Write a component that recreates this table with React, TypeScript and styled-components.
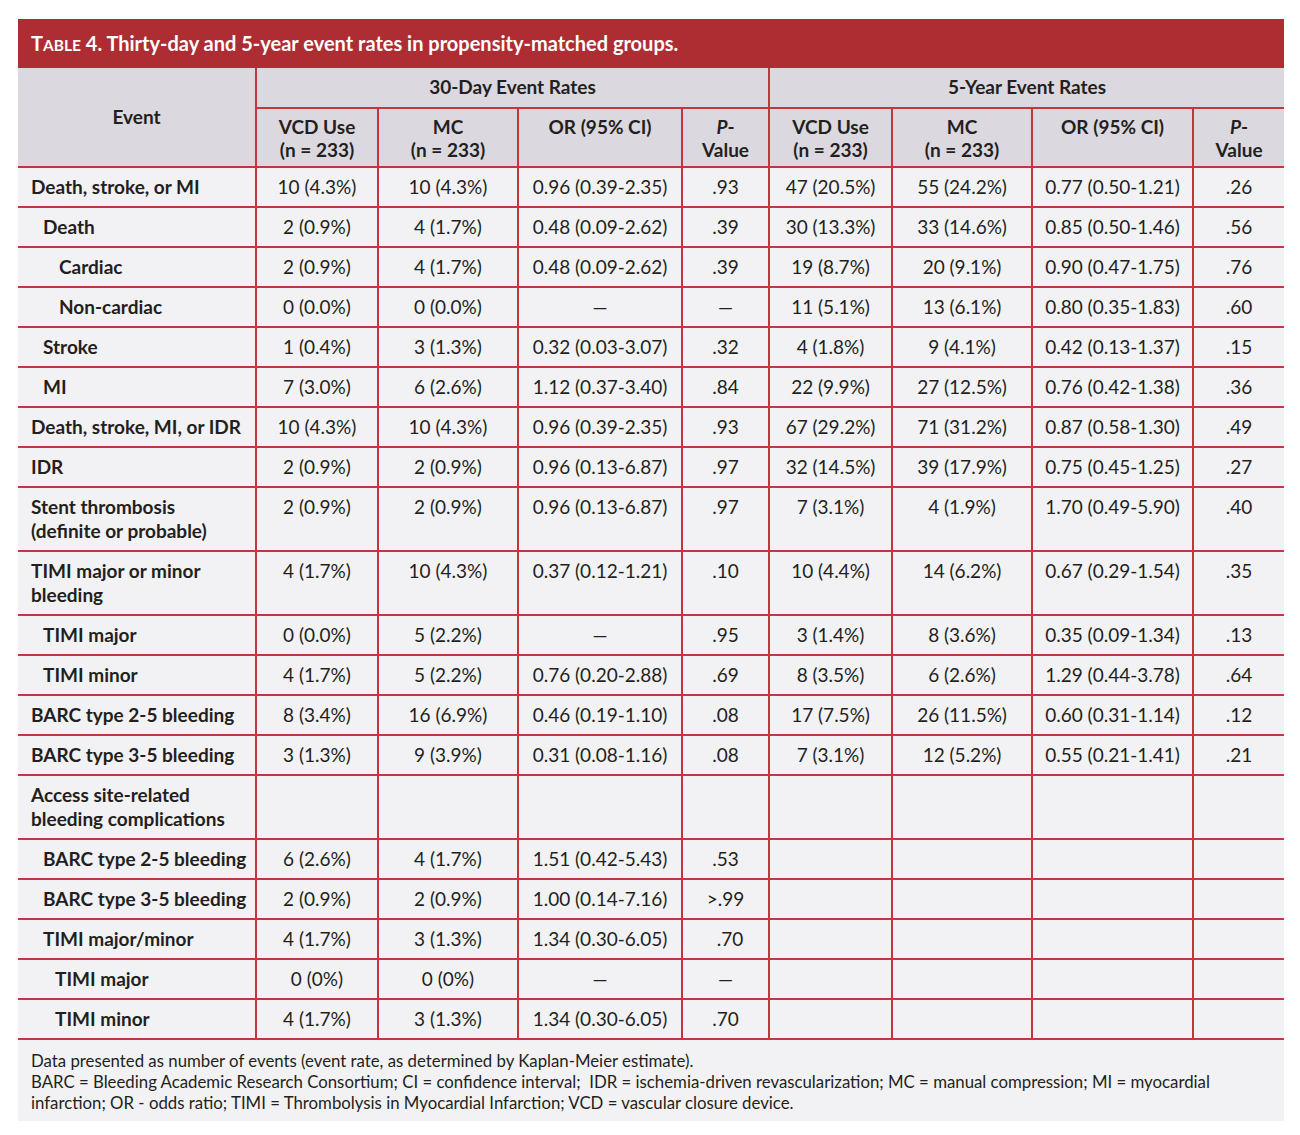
import React from "react";
import styled, { createGlobalStyle } from "styled-components";

const GlobalStyle = createGlobalStyle`
	html, body {
		margin: 0;
		padding: 0;
		background: #ffffff;
	}
	body {
		font-family: Lato, "Open Sans", sans-serif;
		color: #231f20;
	}
`;

type Row = {
	label: React.ReactNode;
	level: number;
	cells: string[];
	shift?: number;
};

const rows: Row[] = [
	{ label: "Death, stroke, or MI", level: 0, cells: ["10 (4.3%)", "10 (4.3%)", "0.96 (0.39-2.35)", ".93", "47 (20.5%)", "55 (24.2%)", "0.77 (0.50-1.21)", ".26"] },
	{ label: "Death", level: 1, cells: ["2 (0.9%)", "4 (1.7%)", "0.48 (0.09-2.62)", ".39", "30 (13.3%)", "33 (14.6%)", "0.85 (0.50-1.46)", ".56"] },
	{ label: "Cardiac", level: 3, cells: ["2 (0.9%)", "4 (1.7%)", "0.48 (0.09-2.62)", ".39", "19 (8.7%)", "20 (9.1%)", "0.90 (0.47-1.75)", ".76"] },
	{ label: "Non-cardiac", level: 3, cells: ["0 (0.0%)", "0 (0.0%)", "—", "—", "11 (5.1%)", "13 (6.1%)", "0.80 (0.35-1.83)", ".60"] },
	{ label: "Stroke", level: 1, cells: ["1 (0.4%)", "3 (1.3%)", "0.32 (0.03-3.07)", ".32", "4 (1.8%)", "9 (4.1%)", "0.42 (0.13-1.37)", ".15"] },
	{ label: "MI", level: 1, cells: ["7 (3.0%)", "6 (2.6%)", "1.12 (0.37-3.40)", ".84", "22 (9.9%)", "27 (12.5%)", "0.76 (0.42-1.38)", ".36"] },
	{ label: "Death, stroke, MI, or IDR", level: 0, cells: ["10 (4.3%)", "10 (4.3%)", "0.96 (0.39-2.35)", ".93", "67 (29.2%)", "71 (31.2%)", "0.87 (0.58-1.30)", ".49"] },
	{ label: "IDR", level: 0, cells: ["2 (0.9%)", "2 (0.9%)", "0.96 (0.13-6.87)", ".97", "32 (14.5%)", "39 (17.9%)", "0.75 (0.45-1.25)", ".27"] },
	{ label: <>Stent thrombosis<br />(definite or probable)</>, level: 0, cells: ["2 (0.9%)", "2 (0.9%)", "0.96 (0.13-6.87)", ".97", "7 (3.1%)", "4 (1.9%)", "1.70 (0.49-5.90)", ".40"] },
	{ label: <>TIMI major or minor<br />bleeding</>, level: 0, cells: ["4 (1.7%)", "10 (4.3%)", "0.37 (0.12-1.21)", ".10", "10 (4.4%)", "14 (6.2%)", "0.67 (0.29-1.54)", ".35"] },
	{ label: "TIMI major", level: 1, cells: ["0 (0.0%)", "5 (2.2%)", "—", ".95", "3 (1.4%)", "8 (3.6%)", "0.35 (0.09-1.34)", ".13"] },
	{ label: "TIMI minor", level: 1, cells: ["4 (1.7%)", "5 (2.2%)", "0.76 (0.20-2.88)", ".69", "8 (3.5%)", "6 (2.6%)", "1.29 (0.44-3.78)", ".64"] },
	{ label: "BARC type 2-5 bleeding", level: 0, cells: ["8 (3.4%)", "16 (6.9%)", "0.46 (0.19-1.10)", ".08", "17 (7.5%)", "26 (11.5%)", "0.60 (0.31-1.14)", ".12"] },
	{ label: "BARC type 3-5 bleeding", level: 0, cells: ["3 (1.3%)", "9 (3.9%)", "0.31 (0.08-1.16)", ".08", "7 (3.1%)", "12 (5.2%)", "0.55 (0.21-1.41)", ".21"] },
	{ label: <>Access site-related<br />bleeding complications</>, level: 0, cells: ["", "", "", "", "", "", "", ""] },
	{ label: "BARC type 2-5 bleeding", level: 1, cells: ["6 (2.6%)", "4 (1.7%)", "1.51 (0.42-5.43)", ".53", "", "", "", ""] },
	{ label: "BARC type 3-5 bleeding", level: 1, cells: ["2 (0.9%)", "2 (0.9%)", "1.00 (0.14-7.16)", ">.99", "", "", "", ""] },
	{ label: "TIMI major/minor", level: 1, cells: ["4 (1.7%)", "3 (1.3%)", "1.34 (0.30-6.05)", ".70", "", "", "", ""], shift: 9 },
	{ label: "TIMI major", level: 2, cells: ["0 (0%)", "0 (0%)", "—", "—", "", "", "", ""] },
	{ label: "TIMI minor", level: 2, cells: ["4 (1.7%)", "3 (1.3%)", "1.34 (0.30-6.05)", ".70", "", "", "", ""] },
];

const colWidths = [238, 122, 140, 164, 87, 123, 140, 161, 91];
const indents = [13, 25, 37, 41];

export default function App() {
	return (
		<Page>
			<GlobalStyle />
			<Wrapper>
				<TitleBar>
					T<SmallCaps>able</SmallCaps> 4. Thirty-day and 5-year event rates in propensity-matched groups.
				</TitleBar>
				<Table>
					<colgroup>
						{colWidths.map((w, i) => (
							<col key={i} style={{ width: w }} />
						))}
					</colgroup>
					<thead>
						<tr>
							<HeadCell rowSpan={2} $middle>
								Event
							</HeadCell>
							<HeadCell colSpan={4} $middle>
								30-Day Event Rates
							</HeadCell>
							<HeadCell colSpan={4} $middle>
								5-Year Event Rates
							</HeadCell>
						</tr>
						<tr>
							{[0, 1].map((g) => (
								<React.Fragment key={g}>
									<HeadCell $tall>
										VCD Use
										<br />
										(n = 233)
									</HeadCell>
									<HeadCell $tall>
										MC
										<br />
										(n = 233)
									</HeadCell>
									<HeadCell $tall>OR (95% CI)</HeadCell>
									<HeadCell $tall>
										<i>P</i>-
										<br />
										Value
									</HeadCell>
								</React.Fragment>
							))}
						</tr>
					</thead>
					<tbody>
						{rows.map((r, i) => (
							<tr key={i}>
								<Label $indent={indents[r.level]}>{r.label}</Label>
								{r.cells.map((c, j) => (
									<Cell key={j} $shift={j === 3 ? r.shift : undefined}>
										{c}
									</Cell>
								))}
							</tr>
						))}
					</tbody>
				</Table>
				<Footnote>
					Data presented as number of events (event rate, as determined by Kaplan-Meier estimate).
					<br />
					BARC = Bleeding Academic Research Consortium; CI = confidence interval;&nbsp; IDR = ischemia-driven revascularization; MC = manual compression; MI = myocardial
					infarction; OR - odds ratio; TIMI = Thrombolysis in Myocardial Infarction; VCD = vascular closure device.
				</Footnote>
			</Wrapper>
		</Page>
	);
}

const Page = styled.div`
	padding: 19px 16px 15px 18px;
	background: #ffffff;
`;

const Wrapper = styled.div`
	width: 1266px;
	display: flex;
	flex-direction: column;
`;

const TitleBar = styled.div`
	background: #ad2d33;
	color: #ffffff;
	font-family: Lato, sans-serif;
	font-weight: 700;
	font-size: 20px;
	height: 49px;
	line-height: 48px;
	padding-left: 13px;
	white-space: nowrap;
`;

const SmallCaps = styled.span`
	text-transform: uppercase;
	font-size: 15.5px;
`;

const Table = styled.table`
	width: 1266px;
	table-layout: fixed;
	border-collapse: collapse;
	font-family: Lato, sans-serif;
	font-size: 19px;
	color: #231f20;
`;

const HeadCell = styled.th<{ $middle?: boolean; $tall?: boolean }>`
	background: #dcd8df;
	font-weight: 700;
	text-align: center;
	vertical-align: ${(p) => (p.$middle ? "middle" : "top")};
	border: 2px solid #c0383e;
	border-top: none;
	line-height: 23px;
	padding: ${(p) => (p.$tall ? "6px 4px 5px" : "7px 4px 9px")};
	&:first-child {
		border-left: none;
	}
	&:last-child {
		border-right: none;
	}
`;

const Label = styled.td<{ $indent: number }>`
	background: #f2f2f4;
	font-weight: 700;
	text-align: left;
	vertical-align: top;
	line-height: 24px;
	padding: 7px 4px 7px ${(p) => p.$indent}px;
	border: 2px solid #c0383e;
	border-left: none;
	white-space: nowrap;
`;

const Cell = styled.td<{ $shift?: number }>`
	background: #f2f2f4;
	text-align: center;
	vertical-align: top;
	line-height: 24px;
	padding: 7px 4px 7px ${(p) => 4 + (p.$shift ?? 0)}px;
	border: 2px solid #c0383e;
	white-space: nowrap;
	&:last-child {
		border-right: none;
	}
`;

const Footnote = styled.div`
	background: #f2f2f4;
	font-family: Lato, sans-serif;
	font-size: 16.8px;
	line-height: 21px;
	color: #231f20;
	padding: 10px 50px 8px 13px;
`;
